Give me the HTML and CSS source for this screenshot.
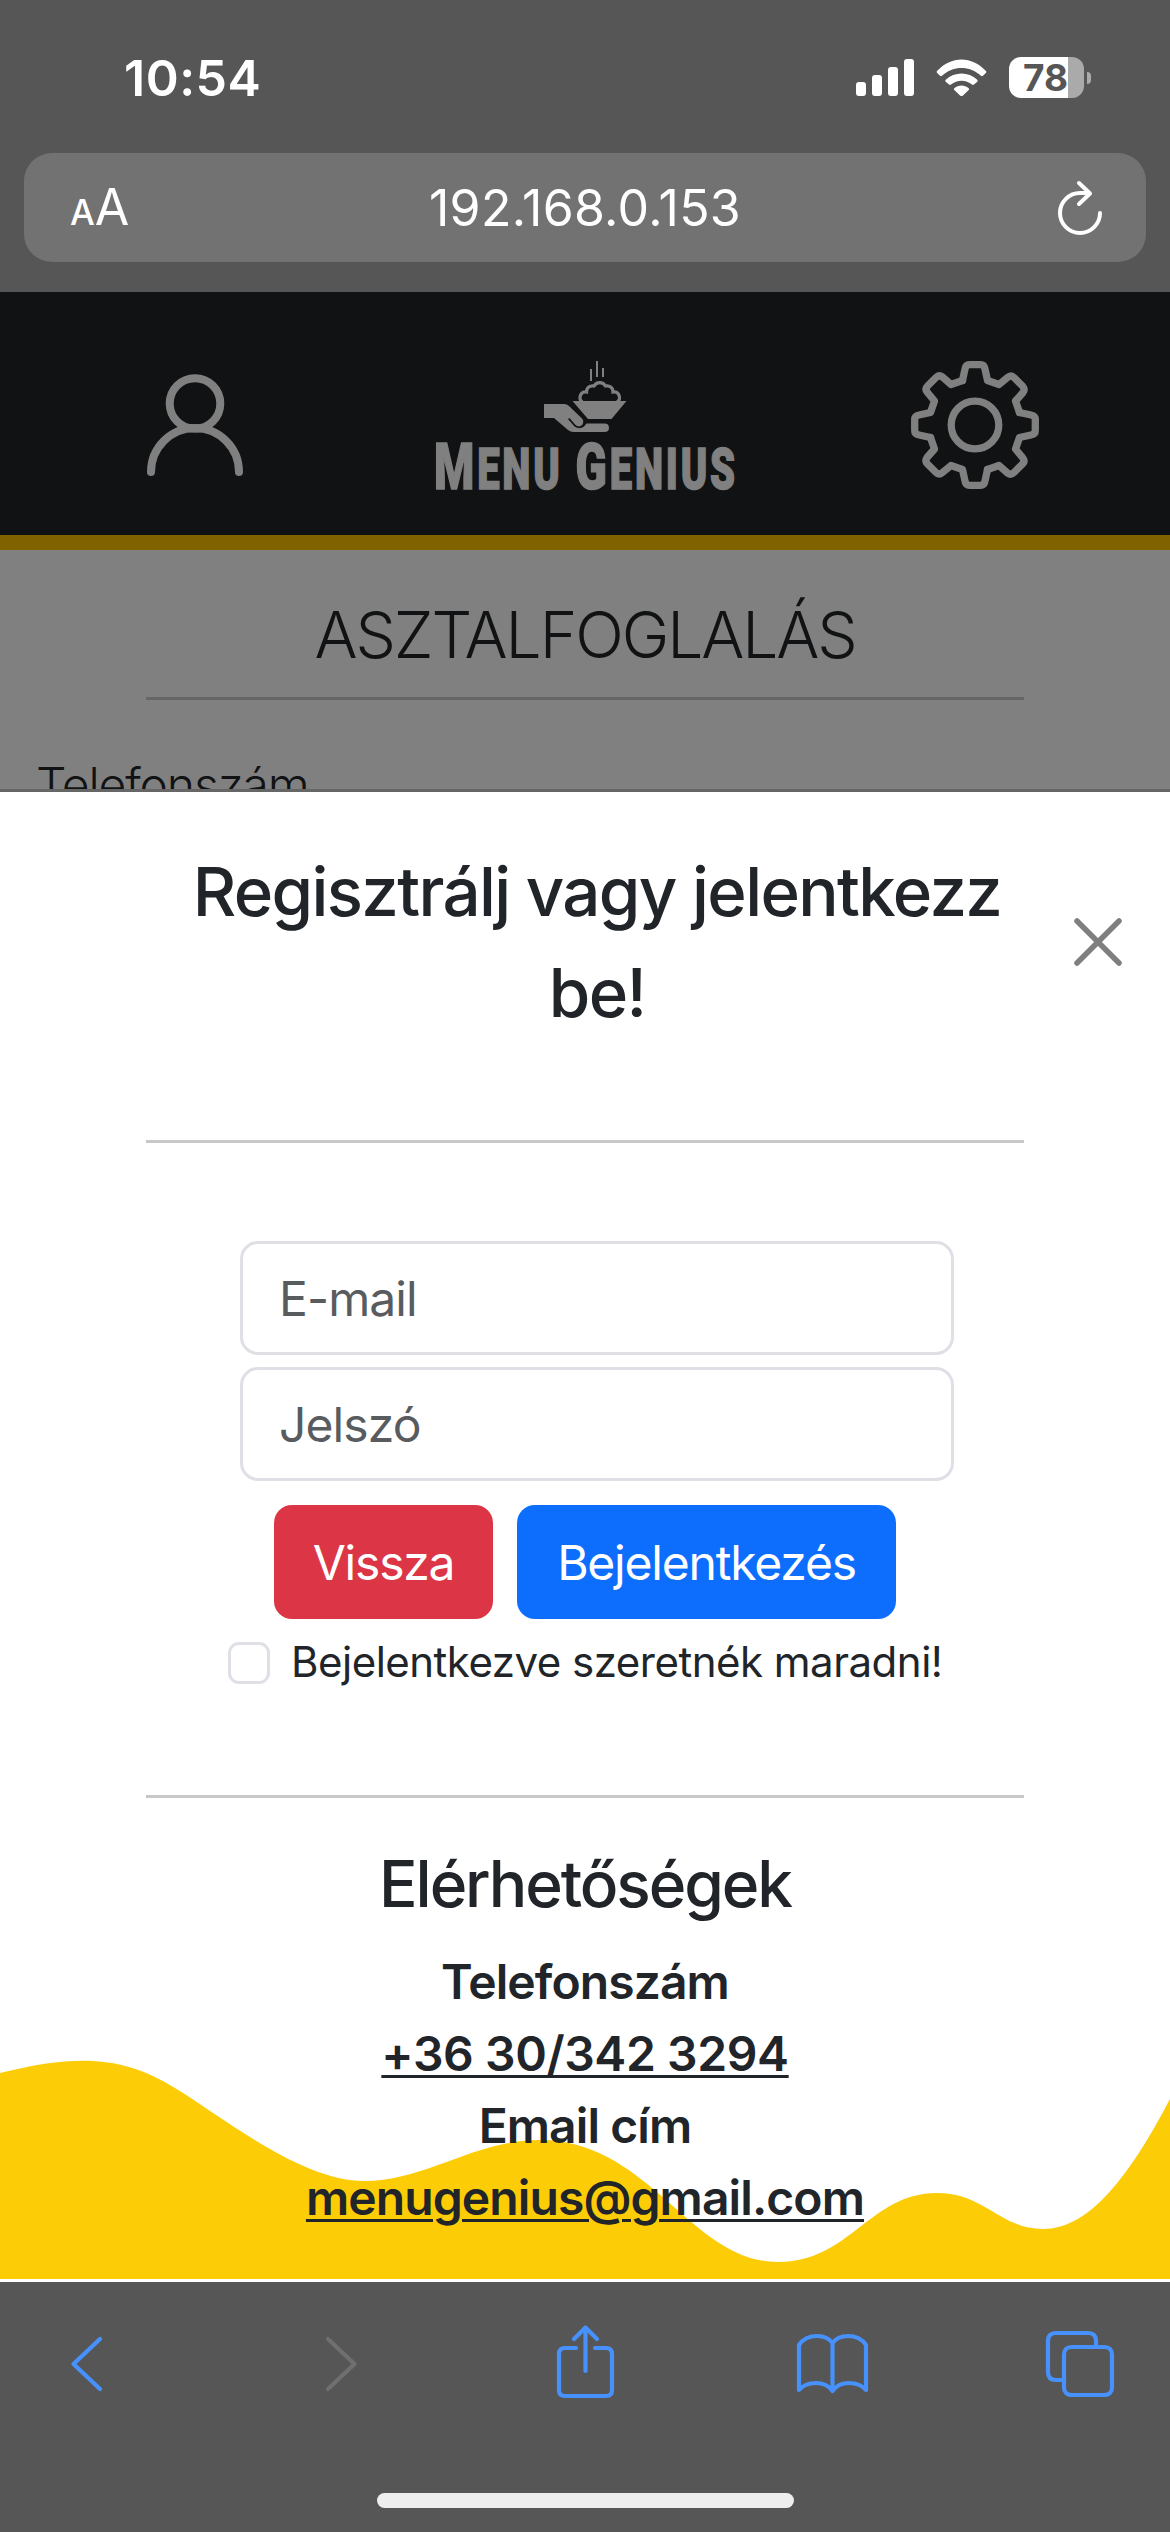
FILE: index.html
```html
<!DOCTYPE html>
<html lang="hu">
<head>
<meta charset="utf-8">
<title>Menu Genius</title>
<link rel="stylesheet" href="styles.css">
</head>
<body>
<div class="phone">
  <header class="browser-top">
    <div class="status">
      <span class="time">10:54</span>
      <div class="status-icons">
        <svg width="58" height="40" viewBox="0 0 58 40" fill="#fff"><rect y="25" width="10" height="14" rx="3"/><rect x="16" y="18" width="10" height="21" rx="3"/><rect x="32" y="10" width="10" height="29" rx="3"/><rect x="48" y="2" width="10" height="37" rx="3"/></svg>
        <svg class="wifi" width="51" height="40" viewBox="0 0 51 40" fill="#fff"><path d="M1 14C15-1.500 36-1.500 50 14q.7 1-.2 2l-2.800 2.800q-1 .9-2 0C34 8.300 17 8.300 6 18.800q-1 .9-2 0L1.200 16q-.9-1-.2-2zM9.700 22.800c9-8.500 22.600-8.500 31.600 0q.8 1 0 1.900L38 27.600q-1 .8-2 0c-6-5.300-15-5.300-21 0q-1 .8-2 0l-3.300-2.900q-.8-.9 0-1.900zM18.300 31.300c4.400-3.700 10-3.700 14.400 0q.8.8 0 1.800l-5.700 5.300q-1.500 1.200-3 0l-5.700-5.300q-.8-1 0-1.800z"/></svg>
        <div class="battery"><span>78</span></div><i class="nub"></i>
      </div>
    </div>
    <div class="address">
      <span class="aa"><small>A</small>A</span>
      <span class="url">192.168.0.153</span>
      <svg class="reload" width="48" height="58" viewBox="0 0 48 58" fill="none" stroke="#fff" stroke-width="4" stroke-linecap="round" stroke-linejoin="round"><path d="M44 34A20 20 0 1 1 24 14h9M23 4l11 10.500L23 25"/></svg>
    </div>
  </header>

  <main class="page">
    <nav class="navbar">
      <svg width="96" height="102" viewBox="0 0 96 102" fill="none" stroke="#808080" stroke-width="8" stroke-linecap="round"><circle cx="48" cy="29.500" r="25.300"/><path d="M4 98a44 44 0 0 1 88 0"/></svg>
      <svg class="logo" width="320" height="160" viewBox="425 345 320 160" fill="#808080">
        <path fill="none" stroke="#808080" stroke-width="2" d="M591 369v12M597 361v16M603 368v9"/>
        <path fill="none" stroke="#808080" stroke-width="3.200" d="M582.500 402a5.500 5.500 0 0 1 4-10a6 6 0 0 1 7.500-6a6.500 6.500 0 0 1 11.500 0a6 6 0 0 1 7.500 6a5.500 5.500 0 0 1 4 10"/>
        <path d="M572.500 401h54l-15 18h-23.500zM544 404h20q3 0 5 2l12.500 12q3 3 1 6.500-3.500 3.500-7 .5l-6-7-1.500 1 6.500 7.500q5 3.500 9.500 0l2.500-3h18q4.500 0 4.500 4.300t-4.500 4.300h-31q-3 0-5.500-2l-14-12h-10z"/>
        <text class="logo-text" x="434" y="488.500" textLength="304" lengthAdjust="spacingAndGlyphs"><tspan font-size="65">M</tspan><tspan font-size="56.500">ENU </tspan><tspan font-size="65">G</tspan><tspan font-size="56.500">ENIUS</tspan></text>
      </svg>
      <svg width="128" height="128" viewBox="-64 -64 128 128" fill="none" stroke="#808080" stroke-width="7.300" stroke-linejoin="round" stroke-linecap="round">
        <defs><path id="teeth" d="M-12.500-44.500L-10-56Q-9.200-60.300-5.500-60.300H5.500Q9.200-60.300 10-56L12.500-44.500 24-40.500 32.500-47.500Q36-50.500 39-47.500L47.500-39Q50.500-36 48-32.500L40.500-24 44.500-12.500"/></defs>
        <circle r="23.800"/><use href="#teeth"/><use href="#teeth" transform="rotate(90)"/><use href="#teeth" transform="rotate(180)"/><use href="#teeth" transform="rotate(270)"/>
      </svg>
    </nav>
    <h1 class="page-title">ASZTALFOGLALÁS</h1>
    <hr class="rule rule-dim">
    <p class="field-label">Telefonszám</p>
  </main>

  <section class="sheet">
    <svg class="wave" width="1170" height="222" viewBox="0 2060 1170 222" fill="#fccc06"><path d="M0 2073C80 2053 125 2057 175 2088C230 2122 302 2181 365 2181C425 2181 475 2140 540 2140C650 2140 690 2262 778 2262C850 2262 870 2193 937 2193C985 2193 1000 2229 1043 2229C1090 2229 1130 2175 1170 2099V2279H0z"/></svg>
    <div class="sheet-head">
      <h2>Regisztrálj vagy jelentkezz be!</h2>
      <svg width="48" height="48" viewBox="0 0 48 48" stroke="#7f7f7f" stroke-width="5.500" stroke-linecap="round"><path d="M3 3l42 42M45 3L3 45"/></svg>
    </div>
    <hr class="rule">
    <form class="login">
      <input class="field" type="email" placeholder="E-mail">
      <input class="field" type="password" placeholder="Jelszó">
      <div class="buttons">
        <button class="btn back" type="button"><span>Vissza</span></button>
        <button class="btn submit" type="button"><span>Bejelentkezés</span></button>
      </div>
      <label class="remember"><input type="checkbox"><span>Bejelentkezve szeretnék maradni!</span></label>
    </form>
    <hr class="rule">
    <div class="contact">
      <h3>Elérhetőségek</h3>
      <p>Telefonszám</p>
      <p class="number"><a>+36 30/342 3294</a></p>
      <p>Email cím</p>
      <p><a>menugenius@gmail.com</a></p>
    </div>
  </section>

  <footer class="browser-bottom">
    <div class="tools">
      <svg width="36" height="80" viewBox="68 2322 36 80"><path d="M100 2339L73.500 2364 100 2389"/></svg>
      <svg class="off" width="36" height="80" viewBox="323 2322 36 80"><path d="M328 2339L354.500 2364 328 2389"/></svg>
      <svg width="60" height="80" viewBox="555 2322 60 80"><path d="M576 2348h-11q-6 0-6 6v36q0 6 6 6h41q6 0 6-6v-36q0-6-6-6h-11M585.500 2371v-42M574 2339l11.500-11.500L597 2339"/></svg>
      <svg width="74" height="80" viewBox="795 2322 74 80"><path d="M832.500 2391v-48q-5-7-15.500-7-12 0-18 9v45q6-7 17-7 11 0 16.500 8 5.500-8 16.500-8 11 0 17 7v-45q-6-9-18-9-10.500 0-15.500 7"/></svg>
      <svg width="72" height="80" viewBox="1044 2322 72 80"><rect x="1064" y="2347" width="48" height="48" rx="7"/><path d="M1064 2380h-8q-8 0-8-8v-31q0-8 8-8h32q8 0 8 8v6"/></svg>
    </div>
    <div class="home"></div>
  </footer>
</div>
</body>
</html>
```
FILE: styles.css
```css
* { box-sizing: border-box; }
body, h1, h2, h3, p, hr { margin: 0; }
body { font-family: Inter, "Liberation Sans", sans-serif; color: #212529; background: #565656; }
svg { display: block; flex: none; }
.phone { width: 1170px; height: 2532px; overflow: hidden; display: flex; flex-direction: column; }

.browser-top { height: 292px; flex: none; background: #565656; color: #fff; }
.status { height: 153px; padding: 57px 79px 0 124px; display: flex; justify-content: space-between; align-items: flex-start; }
.time { font-size: 50px; line-height: 42px; font-weight: 600; letter-spacing: 0.5px; }
.status-icons { display: flex; align-items: flex-start; height: 41px; }
.wifi { margin: 0 22px; }
.battery { width: 75px; height: 41px; border-radius: 12px; background: linear-gradient(90deg, #fff 59px, #aaa 59px); color: #565656; font-size: 37px; line-height: 41px; font-weight: 700; padding-left: 14px; }
.nub { width: 4px; height: 12px; margin: 15px 0 0 3px; background: #aaa; border-radius: 0 5px 5px 0; }
.address { margin: 0 24px; height: 109px; border-radius: 28px; background: #727272; display: grid; grid-template-columns: 200px 1fr 200px; align-items: center; }
.aa { padding: 3px 0 0 46px; font-size: 50px; line-height: 60px; letter-spacing: -1px; }
.aa small { font-size: 35px; font-weight: 500; margin-right: 1px; }
.url { text-align: center; font-size: 50px; line-height: 60px; letter-spacing: 0.3px; }
.reload { justify-self: end; margin-right: 42px; }

.page { height: 500px; flex: none; background: #808080; color: #111213; overflow: hidden; border-bottom: 3px solid #666; }
.navbar { height: 258px; background: #111213; border-bottom: 15px solid #806200; padding: 51px 131px 28px 147px; display: flex; justify-content: space-between; align-items: center; }
.logo { margin-left: 16px; }
.logo-text { font-family: Roboto, sans-serif; font-weight: 900; letter-spacing: 4px; stroke: #808080; stroke-width: 1.5; }
.page-title { margin-top: 47px; height: 100px; text-align: center; font-size: 64px; line-height: 76px; font-weight: 300; letter-spacing: -2.1px; }
.rule { width: 878px; height: 3px; margin: 0 auto; border: 0; background: #c7c8c9; }
.rule-dim { background: #666; }
.field-label { padding: 55px 0 0 36px; font-size: 48px; line-height: 60px; font-weight: 300; letter-spacing: -1.1px; }

.sheet { position: relative; height: 1490px; flex: none; background: #fff; }
.wave { position: absolute; left: 0; bottom: 0; }
.sheet-head { height: 348px; padding: 49px 48px 0 144px; display: flex; justify-content: space-between; }
.sheet-head h2 { width: 906px; text-align: center; font-size: 67.2px; line-height: 101px; font-weight: 500; letter-spacing: -1.65px; }
.sheet-head svg { margin-top: 77px; }
.login { height: 652px; padding-top: 98px; }
.field { display: block; width: 714px; height: 114px; margin: 0 0 12px 240px; padding: 0 36px; border: 3px solid #dee0e5; border-radius: 18px; background: #fff; font: 400 48px/72px Inter, sans-serif; letter-spacing: -0.9px; }
.field::placeholder { color: #595c5f; opacity: 1; }
.buttons { display: flex; justify-content: center; gap: 24px; margin-top: 24px; }
.btn { height: 114px; border: 0; padding: 1px 0 0; border-radius: 18px; color: #fff; font: 400 48px/72px Inter, sans-serif; letter-spacing: -1.2px; white-space: nowrap; }
.back { width: 219px; background: #dc3545; }
.submit { width: 379px; background: #0d6efd; }
.remember { display: flex; align-items: center; margin: 12px 0 0 228px; height: 64px; font-size: 42px; letter-spacing: -0.5px; white-space: nowrap; }
.remember input { appearance: none; width: 42px; height: 42px; margin: 0 21px 0 0; border: 3px solid #dee0e5; border-radius: 11px; flex: none; }
.remember span { margin-top: -3px; }
.contact { position: relative; text-align: center; padding-top: 48px; font-size: 48px; line-height: 72px; font-weight: 600; letter-spacing: -0.9px; }
.contact h3 { font-size: 64px; line-height: 76px; font-weight: 500; margin-bottom: 24px; letter-spacing: -2.1px; }
.contact .number { letter-spacing: -0.4px; }
.contact a { text-decoration: underline; text-decoration-thickness: 3px; text-underline-offset: 4px; }

.browser-bottom { height: 250px; flex: none; background: #565656; padding-top: 40px; }
.tools { display: grid; grid-template-columns: 255px 232px 240px 249px 72px; padding-left: 68px; }
.tools svg { fill: none; stroke: #4791fc; stroke-width: 4.2; stroke-linecap: round; stroke-linejoin: round; }
.tools .off { stroke: #6f6f6f; }
.home { width: 417px; height: 15px; margin: 91px auto 0; background: #eee; border-radius: 8px; }
```
